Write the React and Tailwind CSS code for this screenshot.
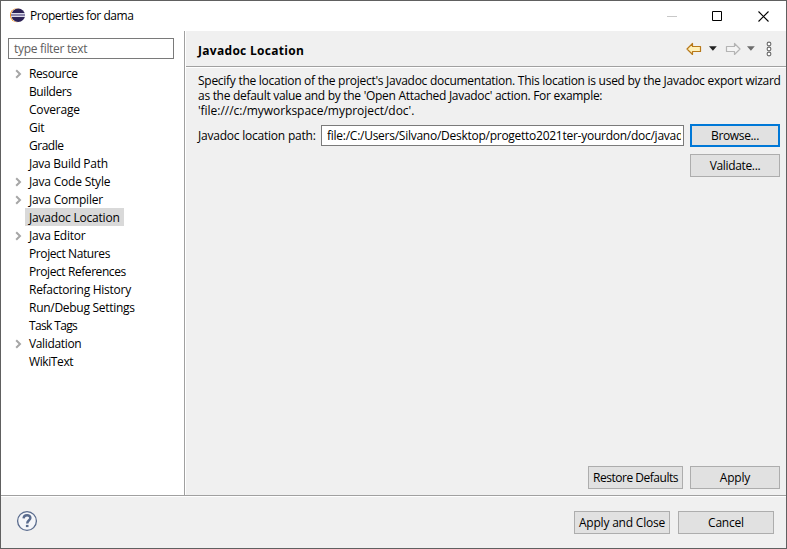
import React from "react";

const TREE = [
  { label: "Resource", expandable: true, tracking: "tracking-[-0.4px]" },
  { label: "Builders", tracking: "tracking-[-0.4px]" },
  { label: "Coverage", tracking: "tracking-[-0.2px]" },
  { label: "Git", tracking: "tracking-[-0.2px]" },
  { label: "Gradle", tracking: "tracking-[-0.5px]" },
  { label: "Java Build Path", tracking: "tracking-[-0.27px]" },
  { label: "Java Code Style", expandable: true, tracking: "tracking-[-0.2px]" },
  { label: "Java Compiler", expandable: true, tracking: "tracking-[-0.2px]" },
  { label: "Javadoc Location", selected: true, tracking: "tracking-[-0.2px]" },
  { label: "Java Editor", expandable: true, tracking: "tracking-[-0.25px]" },
  { label: "Project Natures", tracking: "tracking-[-0.4px]" },
  { label: "Project References", tracking: "tracking-[-0.42px]" },
  { label: "Refactoring History", tracking: "tracking-[-0.27px]" },
  { label: "Run/Debug Settings", tracking: "tracking-[-0.28px]" },
  { label: "Task Tags", tracking: "tracking-[-0.65px]" },
  { label: "Validation", expandable: true, tracking: "tracking-[-0.35px]" },
  { label: "WikiText", tracking: "tracking-[-0.4px]" },
];

function EclipseLogo() {
  return (
    <svg width="16" height="16" viewBox="0 0 16 16">
      <circle cx="7" cy="7.2" r="7" fill="#f7941e" />
      <circle cx="8" cy="7.2" r="7" fill="#fff" />
      <circle cx="8.2" cy="7.2" r="6.8" fill="#2c2255" />
      <rect x="1" y="5" width="14" height="1" fill="#dcdcea" />
      <rect x="1" y="6" width="14" height="2" fill="#8d87ad" />
      <rect x="1" y="8" width="14" height="1" fill="#dcdcea" />
    </svg>
  );
}

function Arrow({ d, stroke, fill }) {
  return (
    <svg width="16" height="14" viewBox="0 0 16 14">
      <path d={d} fill={fill} stroke={stroke} strokeWidth="1.2" strokeLinejoin="round" />
    </svg>
  );
}

function Caret({ color }) {
  return (
    <svg width="8" height="5" viewBox="0 0 8 5">
      <path d="M0 0.3h7.8L3.9 4.7z" fill={color} />
    </svg>
  );
}

function Button({ children, className = "" }) {
  return (
    <button
      className={`flex h-[23px] shrink-0 items-center justify-center whitespace-nowrap bg-[#e1e1e1] ${className}`}
    >
      {children}
    </button>
  );
}

function TitleBar() {
  return (
    <div className="flex h-[30px] shrink-0 items-center bg-white pl-[9px]">
      <EclipseLogo />
      <span className="ml-1 text-[12px] tracking-[-0.47px]">Properties for dama</span>
      <div className="ml-auto flex items-center pr-[17px]">
        <svg width="10" height="11" viewBox="0 0 10 11">
          <path d="M0 5.5h10" stroke="#c8c8c8" />
        </svg>
        <svg className="ml-[35px]" width="10" height="10" viewBox="0 0 10 10">
          <path d="M0.5 0.5h9v9h-9z" fill="none" stroke="#000" />
        </svg>
        <svg className="ml-9" width="11" height="11" viewBox="0 0 11 11">
          <path d="M0.5 0.5l10 10M10.5 0.5l-10 10" stroke="#000" strokeWidth="1.1" />
        </svg>
      </div>
    </div>
  );
}

function Sidebar() {
  return (
    <div className="w-[184px] shrink-0 border-r border-[#a0a0a0] bg-white pl-[7px] pt-[7px]">
      <div className="flex h-[21px] w-[166px] items-center border border-[#7a7a7a] pl-[5px] pt-px tracking-[-0.31px] text-[#606060]">
        type filter text
      </div>
      <ul className="pt-[5px]">
        {TREE.map((item) => (
          <li key={item.label} className="flex h-[18px] items-center pl-[7px]">
            <span className="w-[10px] pt-[2px]">
              {item.expandable && (
                <svg width="7" height="10" viewBox="0 0 7 10">
                  <path d="M1.2 1.2L5 5L1.2 8.8" fill="none" stroke="#a6a6a6" strokeWidth="2" />
                </svg>
              )}
            </span>
            <span
              className={`flex h-[18px] items-center whitespace-nowrap px-1 pt-px ${item.tracking} ${item.selected ? "bg-[#d9d9d9]" : ""}`}
            >
              {item.label}
            </span>
          </li>
        ))}
      </ul>
    </div>
  );
}

function PageHeader() {
  return (
    <div className="flex h-[36px] shrink-0 items-center border-b border-[#a0a0a0] pl-3 pr-[14px]">
      <h1 className="pt-1 text-[12px] font-bold tracking-[0.3px]">Javadoc Location</h1>
      <div className="ml-auto flex items-center">
        <Arrow d="M1 7L6.5 1.5V4.5H14.5V9.5H6.5V12.5Z" fill="#fff0b8" stroke="#b8791a" />
        <span className="ml-[7px]"><Caret color="#222" /></span>
        <span className="ml-2"><Arrow d="M15 7L9.5 1.5V4.5H1.5V9.5H9.5V12.5Z" fill="#f4f4f4" stroke="#b4b4b4" /></span>
        <span className="ml-[6px]"><Caret color="#6c6c6c" /></span>
        <svg className="ml-[11px]" width="6" height="16" viewBox="0 0 6 16">
          <g fill="#fff" stroke="#6a6a6a" strokeWidth="1.1">
            <circle cx="3" cy="3" r="1.9" />
            <circle cx="3" cy="8" r="1.9" />
            <circle cx="3" cy="13" r="1.9" />
          </g>
        </svg>
      </div>
    </div>
  );
}

function Content() {
  return (
    <div className="flex min-w-0 flex-1 flex-col border-l border-white bg-[#f0f0f0]">
      <PageHeader />
      <div className="flex min-h-0 flex-1 flex-col border-t border-white pl-3 pr-[6px] pt-[5px]">
        <div className="whitespace-nowrap leading-[15px]">
          <p className="tracking-[-0.27px]">
            Specify the location of the project's Javadoc documentation. This location is used by the Javadoc export wizard
          </p>
          <p className="tracking-[-0.29px]">
            as the default value and by the 'Open Attached Javadoc' action. For example:
          </p>
          <p className="tracking-[-0.03px]">'file:///c:/myworkspace/myproject/doc'.</p>
        </div>
        <div className="mt-[6px] flex items-center">
          <label className="w-[123px] shrink-0 whitespace-nowrap tracking-[-0.22px]">Javadoc location path:</label>
          <div className="flex h-[21px] w-[363px] shrink-0 items-center border border-[#7a7a7a] bg-white pl-[5px] pr-[2px]">
            <span className="overflow-hidden whitespace-nowrap tracking-[-0.26px]">
              file:/C:/Users/Silvano/Desktop/progetto2021ter-yourdon/doc/javadoc
            </span>
          </div>
          <Button className="ml-[6px] w-[90px] border-2 border-[#0078d7] tracking-[-0.35px]">Browse...</Button>
        </div>
        <div className="mt-[7px] flex justify-end">
          <Button className="w-[90px] border border-[#adadad] tracking-[-0.35px]">Validate...</Button>
        </div>
        <div className="mb-[6px] mt-auto flex justify-end gap-[7px]">
          <Button className="w-[95px] border border-[#adadad] tracking-[-0.48px]">Restore Defaults</Button>
          <Button className="w-[90px] border border-[#adadad]">Apply</Button>
        </div>
      </div>
    </div>
  );
}

function Footer() {
  return (
    <div className="flex h-[53px] shrink-0 items-start border-t border-[#a0a0a0] bg-[#f0f0f0] pl-[15px] pr-3 shadow-[inset_0_1px_0_#fff]">
      <svg className="mt-[14px]" width="22" height="22" viewBox="0 0 22 22">
        <circle cx="11" cy="11" r="9.4" fill="#f5f6f9" stroke="#596b8d" strokeWidth="1.3" />
        <path
          d="M7.6 8.4C7.7 6.1 9.2 5.2 11.1 5.2C13.1 5.2 14.4 6.3 14.4 8C14.4 10.2 11.2 10.4 11.2 13.4"
          fill="none"
          stroke="#596b8d"
          strokeWidth="2.4"
        />
        <rect x="9.9" y="14.9" width="2.6" height="2.2" fill="#596b8d" />
      </svg>
      <div className="ml-auto mt-[15px] flex gap-2">
        <Button className="w-24 border border-[#adadad] pt-px">Apply and Close</Button>
        <Button className="w-24 border border-[#adadad] pt-px">Cancel</Button>
      </div>
    </div>
  );
}

export default function App() {
  return (
    <div className="flex h-[549px] w-[787px] flex-col overflow-hidden border border-[#606060] bg-white font-['Open_Sans','Noto_Sans',sans-serif] text-[12px] leading-[16px] tracking-[-0.2px] text-black">
      <TitleBar />
      <div className="flex min-h-0 flex-1">
        <Sidebar />
        <Content />
      </div>
      <Footer />
    </div>
  );
}
